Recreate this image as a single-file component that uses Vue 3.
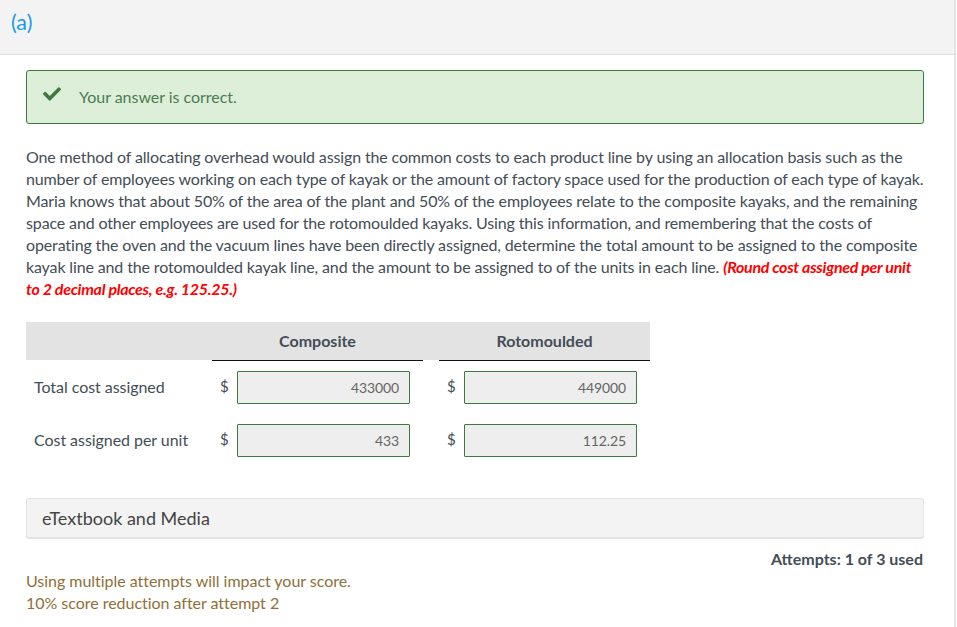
<script setup>
const rows = [
  { label: 'Total cost assigned', a: '433000', b: '449000' },
  { label: 'Cost assigned per unit', a: '433', b: '112.25' },
]
</script>

<template>
  <div class="page">
    <header class="head">(a)</header>
    <main class="body">
      <div class="alert">
        <svg class="check" viewBox="0 0 512 512" width="18" height="18" aria-hidden="true">
          <path d="M173.898 439.404l-166.4-166.4c-9.997-9.997-9.997-26.206 0-36.204l36.203-36.204c9.997-9.998 26.207-9.998 36.204 0L192 312.69 432.095 72.596c9.997-9.997 26.207-9.997 36.204 0l36.203 36.204c9.997 9.997 9.997 26.206 0 36.204l-294.4 294.401c-9.998 9.997-26.207 9.997-36.204-.001z" fill="#3d7a40" />
        </svg>
        <span class="alert-text">Your answer is correct.</span>
      </div>
      <p class="question">One method of allocating overhead would assign the common costs to each product line by using an allocation basis such as the number of employees working on each type of kayak or the amount of factory space used for the production of each type of kayak. Maria knows that about 50% of the area of the plant and 50% of the employees relate to the composite kayaks, and the remaining space and other employees are used for the rotomoulded kayaks. Using this information, and remembering that the costs of operating the oven and the vacuum lines have been directly assigned, determine the total amount to be assigned to the composite kayak line and the rotomoulded kayak line, and the amount to be assigned to of the units in each line. <em class="hint">(Round cost assigned per unit to 2 decimal places, e.g. 125.25.)</em></p>
      <div class="table">
        <div class="thead">
          <div class="col-label"></div>
          <div class="th">Composite</div>
          <div class="gap"></div>
          <div class="th">Rotomoulded</div>
        </div>
        <div v-for="r in rows" :key="r.label" class="row">
          <div class="col-label">{{ r.label }}</div>
          <div class="cell"><span class="dollar">$</span><input class="field" :value="r.a" readonly /></div>
          <div class="gap"></div>
          <div class="cell"><span class="dollar">$</span><input class="field" :value="r.b" readonly /></div>
        </div>
      </div>
      <div class="media">eTextbook and Media</div>
      <div class="attempts">Attempts: 1 of 3 used</div>
      <div class="notice">Using multiple attempts will impact your score.<br />10% score reduction after attempt 2</div>
    </main>
  </div>
</template>

<style>
html, body { margin: 0; background: #fff; }
</style>

<style scoped>
.page {
  width: 956px;
  height: 627px;
  box-sizing: border-box;
  border-right: 2px solid #e3e3e3;
  overflow: hidden;
  font-family: Lato, "Liberation Sans", sans-serif;
  color: #434d56;
  font-size: 16px;
}
.head {
  height: 55px;
  box-sizing: border-box;
  background: #f3f3f3;
  border-bottom: 1px solid #dedede;
  padding: 9px 0 0 11px;
  font-size: 21.5px;
  line-height: 26px;
  color: #1a9be8;
}
.body { padding: 15px 30px 0 26px; }
.alert {
  height: 54px;
  box-sizing: border-box;
  display: flex;
  align-items: center;
  background: #deefd9;
  border: 1px solid #3d7a40;
  border-radius: 3px;
  padding-left: 16px;
  color: #4a7c50;
  font-size: 16px;
}
.alert-text { margin-top: -2px; letter-spacing: -0.03px; }
.check { margin: -6px 18px 0 0; }
.question {
  margin: 22px 0 0;
  line-height: 22px;
  letter-spacing: -0.135px;
}
.hint { color: #f00; font-weight: 700; letter-spacing: -0.3px; }
.table { margin-top: 22px; width: 624px; }
.thead, .row { display: flex; }
.thead { height: 39px; align-items: flex-start; }
.thead .col-label, .thead .gap { height: 38px; background: #e3e3e3; }
.col-label { width: 186px; flex: none; }
.th {
  width: 211px;
  height: 39px;
  box-sizing: border-box;
  background: #e3e3e3;
  border-bottom: 1px solid #111;
  text-align: center;
  font-weight: 700;
  font-size: 16px;
  line-height: 38px;
}
.gap { width: 16px; flex: none; }
.row { height: 53px; box-sizing: border-box; padding: 10px 0; align-items: center; }
.row .col-label { padding: 0 0 2px 8px; box-sizing: border-box; letter-spacing: -0.05px; }
.cell { width: 211px; display: flex; align-items: flex-start; }
.dollar { width: 25px; padding-left: 8px; box-sizing: border-box; line-height: 30px; font-size: 15px; }
.field {
  width: 173px;
  height: 33px;
  box-sizing: border-box;
  background: #eee;
  border: 1px solid #3d7a40;
  border-radius: 1px;
  padding: 0 10px 1px;
  text-align: right;
  font: 14px Lato, sans-serif;
  letter-spacing: -0.1px;
  color: #666;
  outline: none;
}
.media {
  margin-top: 31px;
  height: 41px;
  box-sizing: border-box;
  background: #f3f3f3;
  border: 1px solid #e3e3e3;
  border-bottom-width: 2px;
  border-radius: 3px;
  padding-left: 15px;
  font-size: 18px;
  line-height: 39px;
  color: #444;
}
.attempts {
  margin-top: 10px;
  padding-right: 1px;
  text-align: right;
  font-weight: 700;
  font-size: 16px;
  line-height: 20px;
}
.notice {
  margin-top: 1px;
  color: #8f7039;
  line-height: 22px;
  letter-spacing: -0.03px;
}
</style>
